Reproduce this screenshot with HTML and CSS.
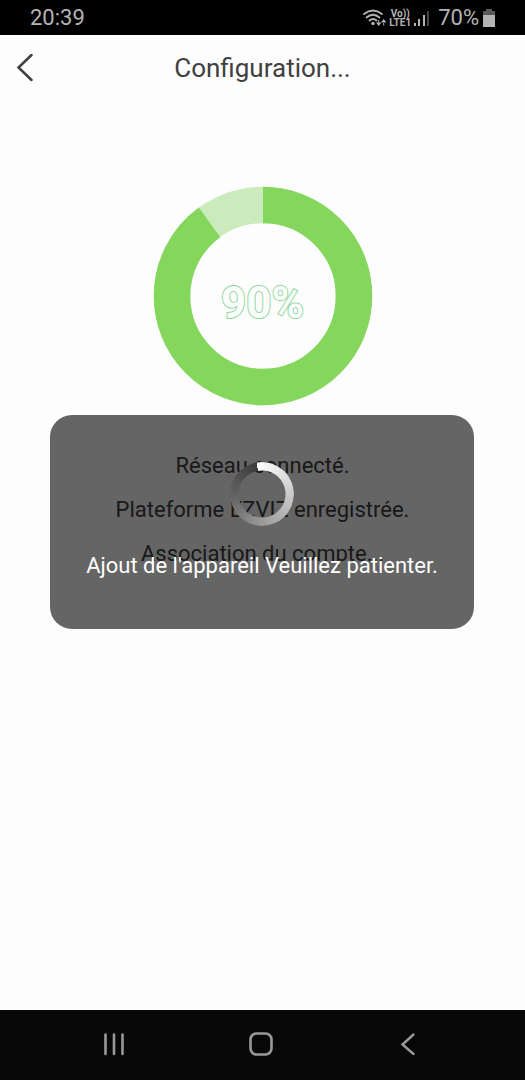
FILE: index.html
```html
<!DOCTYPE html>
<html lang="fr">
<head>
<meta charset="utf-8">
<meta name="viewport" content="width=device-width, initial-scale=1">
<title>Configuration</title>
<link rel="stylesheet" href="styles.css">
</head>
<body>
<div class="status-bar">
  <span class="clock">20:39</span>
  <div class="indicators">
    <svg class="wifi" width="24" height="18" viewBox="0 0 24 18" aria-hidden="true">
      <g fill="none" stroke="currentColor" stroke-width="1.800" stroke-linecap="round">
        <path d="M1 5Q10 -2 19 5"/>
        <path d="M3.500 8.500Q10 3 16.500 8.500"/>
        <path d="M6.500 11.500Q10 8.500 13.500 11.500"/>
      </g>
      <circle cx="10" cy="14.500" r="1.700" fill="currentColor"/>
      <path d="M13 13.500h5.400L15.700 17zM15.200 11h1v3h-1zM18 13.500h5.400L20.700 10zM20.200 13h1v3.500h-1z" fill="currentColor"/>
    </svg>
    <span class="volte"><span>Vo))</span><span>LTE1</span></span>
    <svg class="signal" width="16" height="18" viewBox="0 0 16 18" aria-hidden="true">
      <path d="M0 14h2v3H0zM4 10h2v7H4zM9 6h2v11H9z" fill="currentColor"/>
      <path d="M13 2h2v15h-2z" fill="#444"/>
    </svg>
    <span class="level">70%</span>
    <svg class="battery" width="12" height="18" viewBox="0 0 12 18" aria-hidden="true">
      <path d="M3 0h6v2h3v5H0V2h3z" fill="#5a5a5a"/>
      <path d="M0 6h12v12H0z" fill="currentColor"/>
    </svg>
  </div>
</div>

<header class="app-bar">
  <button class="back" type="button" aria-label="Retour">
    <svg width="18" height="28" viewBox="0 0 18 28" aria-hidden="true"><path d="M15.500 1L2.500 13.500L15.500 26" fill="none" stroke="currentColor" stroke-width="2.500" stroke-linecap="round"/></svg>
  </button>
  <h1 class="title">Configuration...</h1>
</header>

<main class="content">
  <div class="progress" role="progressbar" aria-valuenow="90" aria-valuemin="0" aria-valuemax="100" aria-label="Configuration">
    <svg class="ring" viewBox="0 0 220 220" aria-hidden="true">
      <circle cx="110" cy="110" r="91" fill="none" stroke="#cbebbc" stroke-width="36.500"/>
      <circle cx="110" cy="110" r="91" fill="none" stroke="#84d75c" stroke-width="36.500" pathLength="100" stroke-dasharray="90 10" transform="rotate(-90 110 110)"/>
    </svg>
    <span class="percent">90%</span>
  </div>
  <ul class="steps">
    <li>Réseau connecté.</li>
    <li>Plateforme EZVIZ enregistrée.</li>
    <li>Association du compte...</li>
  </ul>
  <div class="dialog" role="alert">
    <div class="spinner"></div>
    <p class="message">Ajout de l'appareil Veuillez patienter.</p>
  </div>
</main>

<nav class="nav-bar">
  <button type="button" aria-label="Applications récentes">
    <svg width="28" height="28" viewBox="0 0 28 28" aria-hidden="true"><path d="M5.500 4.500V24M14 4.500V24M22.500 4.500V24" fill="none" stroke="currentColor" stroke-width="2.600" stroke-linecap="round"/></svg>
  </button>
  <button type="button" aria-label="Accueil">
    <svg width="28" height="28" viewBox="0 0 28 28" aria-hidden="true"><rect x="3.500" y="3.500" width="21" height="21" rx="6" fill="none" stroke="currentColor" stroke-width="2.600"/></svg>
  </button>
  <button type="button" aria-label="Retour système">
    <svg width="28" height="28" viewBox="0 0 28 28" aria-hidden="true"><path d="M19.500 4.500L8.500 14.500L19.500 24" fill="none" stroke="currentColor" stroke-width="2.400" stroke-linecap="round"/></svg>
  </button>
</nav>
</body>
</html>
```
FILE: styles.css
```css
* {
  box-sizing: border-box;
}

body {
  margin: 0;
  min-height: 100vh;
  display: flex;
  flex-direction: column;
  background: #fdfdfd;
  color: #404040;
  font-family: Roboto, sans-serif;
}

button {
  display: flex;
  padding: 0;
  border: 0;
  background: none;
  color: inherit;
}

.status-bar {
  display: flex;
  align-items: center;
  justify-content: space-between;
  height: 35px;
  padding: 0 30px;
  background: #000;
  color: #b4b4b4;
  font-size: 22px;
}

.indicators {
  display: flex;
  align-items: center;
}

.volte {
  display: flex;
  flex-direction: column;
  align-items: center;
  margin: 0 3px 0 2px;
  font-size: 10px;
  font-weight: 700;
  line-height: 9px;
}

.level {
  margin: 0 4px 0 8px;
}

.app-bar {
  display: grid;
  grid-template-columns: 1fr auto 1fr;
  align-items: center;
  height: 66px;
  padding: 0 16px;
}

.title {
  margin: 0;
  font-size: 26px;
  font-weight: 400;
}

.content {
  position: relative;
  flex: 1;
  display: flex;
  flex-direction: column;
  align-items: center;
  padding-top: 85px;
}

.progress {
  display: grid;
  place-items: center;
  width: 220px;
  height: 220px;
}

.ring,
.percent {
  grid-area: 1 / 1;
}

.ring {
  width: 100%;
}

.percent {
  padding-top: 14px;
  color: #fdfdfd;
  font-size: 44px;
  font-weight: 700;
  -webkit-text-stroke: 2px #8fd89c;
  paint-order: stroke fill;
}

.steps {
  margin: 0;
  padding: 38px 0 0;
  list-style: none;
  font-size: 22px;
  line-height: 44px;
  text-align: center;
}

.dialog {
  position: absolute;
  top: 314px;
  left: 50px;
  right: 51px;
  display: flex;
  flex-direction: column;
  align-items: center;
  padding: 47px 16px 48px;
  border-radius: 22px;
  background: rgba(0, 0, 0, 0.6);
  color: #fff;
}

.spinner {
  width: 64px;
  height: 64px;
  border-radius: 50%;
  background: conic-gradient(from -10deg, #fff, #d0d0d0 25%, #a0a0a0 50%, #666 75%, #3c3c3c);
  -webkit-mask: radial-gradient(circle, transparent 23px, #000 24px);
  mask: radial-gradient(circle, transparent 23px, #000 24px);
}

.message {
  margin: 25px 0 0;
  font-size: 22px;
  line-height: 30px;
  text-align: center;
}

.nav-bar {
  display: flex;
  align-items: center;
  justify-content: space-between;
  height: 70px;
  padding: 0 103px 2px 100px;
  background: #080808;
  color: #999;
}
```
